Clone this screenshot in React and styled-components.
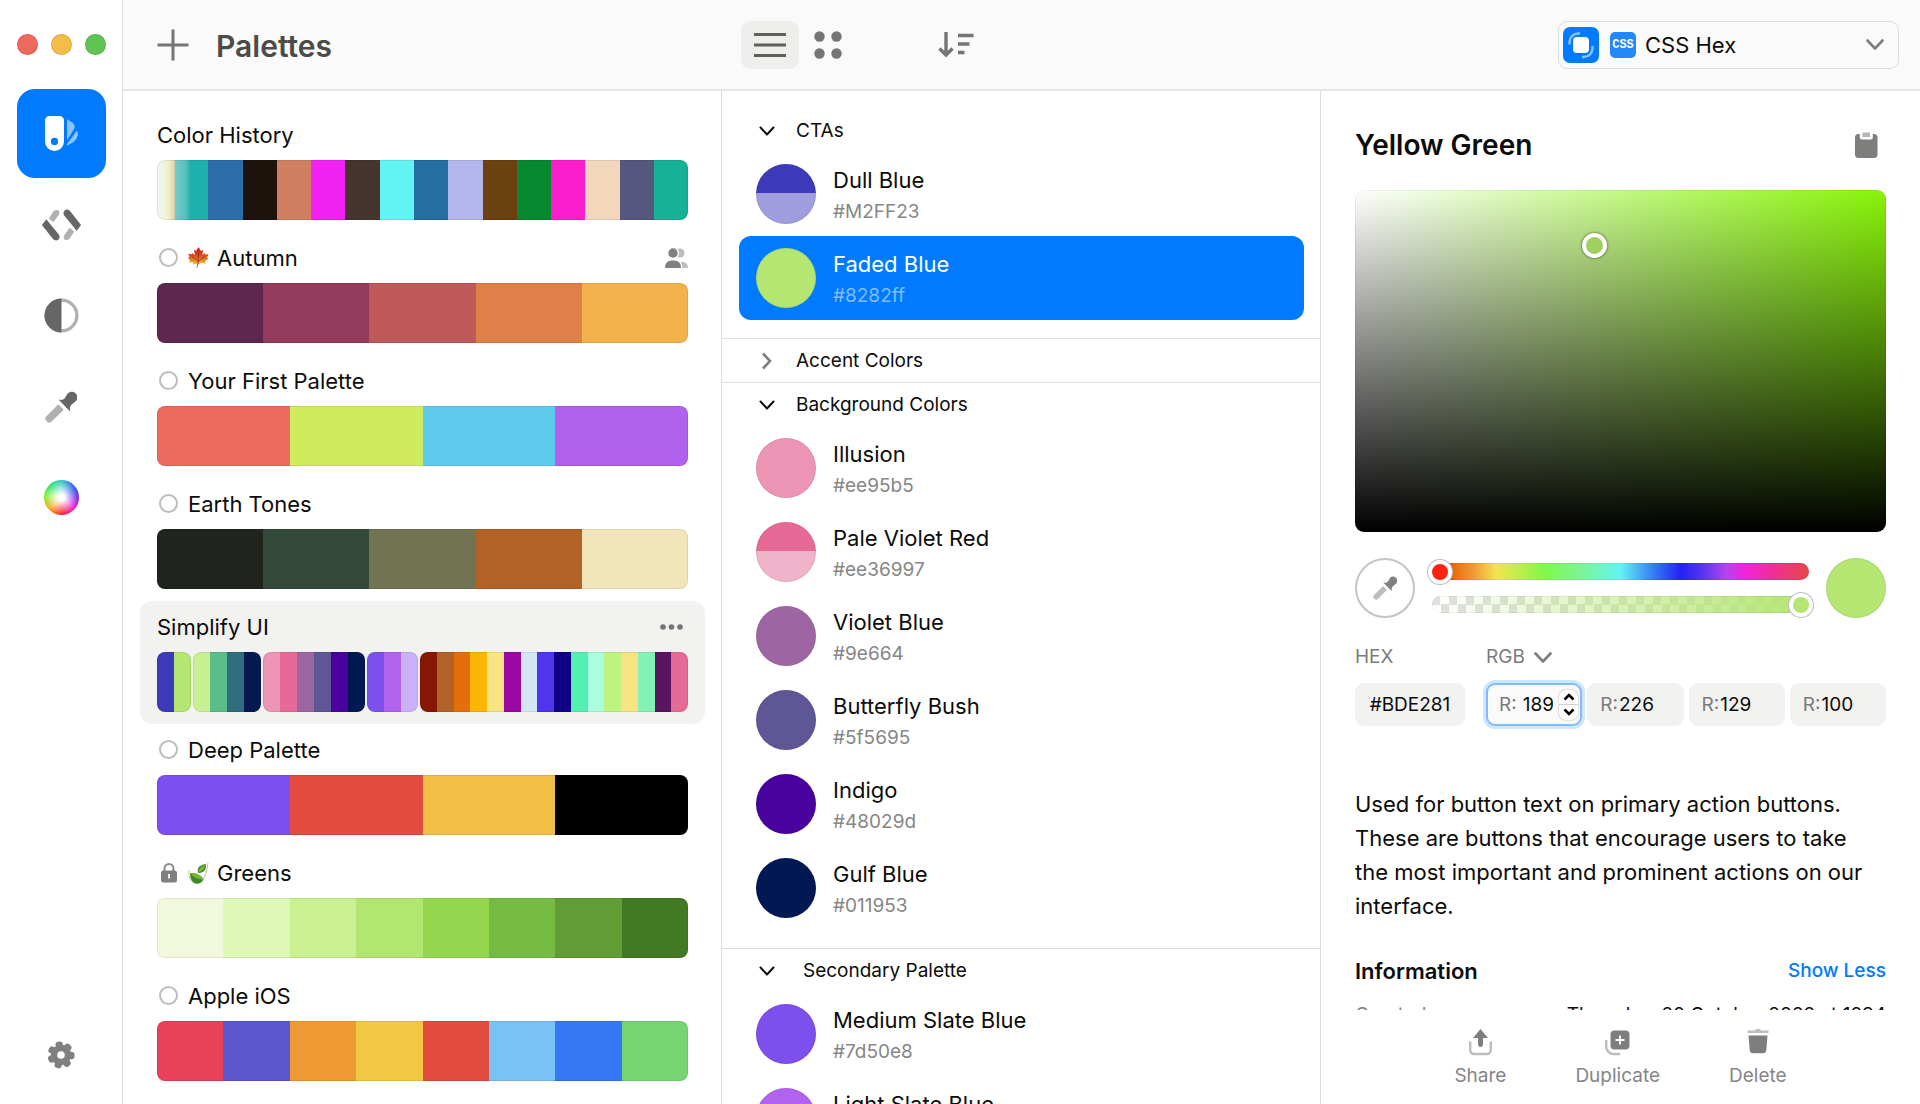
import React from "react";
import styled, { createGlobalStyle, css } from "styled-components";

const Global = createGlobalStyle`
  * { box-sizing: border-box; }
  body { margin: 0; background: #fff; }
  body, button, input, select {
    font-family: Inter, "Liberation Sans", sans-serif;
    color: #0c0c0a;
  }
  button, select, input { border: 0; padding: 0; margin: 0; background: none; }
  h1, h2, h3, p, ul, dl, dd, dt { margin: 0; padding: 0; }
  ul { list-style: none; }
`;

const Window = styled.div`
  display: grid;
  grid-template-columns: 123px minmax(0, 1fr);
  height: 100vh;
  overflow: hidden;
`;

/* ---------- sidebar ---------- */

const Sidebar = styled.nav`
  display: flex;
  flex-direction: column;
  align-items: center;
  border-right: 1px solid #dedee0;
  padding: 34px 0 35px;
`;

const Lights = styled.div`
  display: flex;
  gap: 13px;
  margin-bottom: 34px;
`;

const Light = styled.button`
  width: 21px;
  height: 21px;
  border-radius: 50%;
  background: ${(p) => p.$color};
  box-shadow: inset 0 0 0 1px rgba(0, 0, 0, 0.1);
`;

const Tools = styled.div`
  display: flex;
  flex-direction: column;
  gap: 2px;
  flex: 1;
`;

const Tool = styled.button`
  display: grid;
  place-items: center;
  width: 89px;
  height: 89px;
  border-radius: 18px;
  background: ${(p) => (p.$active ? "#007aff" : "transparent")};
`;

const Wheel = styled.span`
  width: 35px;
  height: 35px;
  border-radius: 50%;
  background: radial-gradient(circle, #fff 12%, rgba(255, 255, 255, 0) 68%),
    conic-gradient(#35c8c8, #2a4bef 60deg, #8a1ff0 95deg, #f018c8 130deg, #f5232b 180deg, #f7a51c 225deg, #8bee2a 275deg, #34e06c 315deg, #35c8c8);
`;

const IconButton = styled.button`
  display: grid;
  place-items: center;
`;

/* ---------- main frame ---------- */

const Main = styled.div`
  display: grid;
  grid-template-rows: 91px minmax(0, 1fr);
  min-width: 0;
  min-height: 0;
`;

const columns = css`
  display: grid;
  grid-template-columns: repeat(3, minmax(0, 1fr));
`;

const Header = styled.header`
  ${columns}
  align-items: center;
  background: #fafafa;
  border-bottom: 2px solid #e6e6e6;
`;

const HeaderPart = styled.div`
  display: flex;
  align-items: center;
  justify-content: ${(p) => (p.$end ? "flex-end" : "flex-start")};
  padding: 0 ${(p) => (p.$end ? 21 : 0)}px 0 ${(p) => p.$left}px;
`;

const PageTitle = styled.h1`
  margin-left: 27px;
  padding-top: 2px;
  font-size: 30px;
  line-height: 34px;
  font-weight: 600;
  color: #4b4b47;
`;

const ViewButton = styled.button`
  display: grid;
  place-items: center;
  width: 58px;
  height: 48px;
  border-radius: 9px;
  background: ${(p) => (p.$active ? "#eeeeec" : "transparent")};
`;

const SortButton = styled(ViewButton)`
  margin-left: 70px;
`;

const FormatBox = styled.label`
  display: flex;
  align-items: center;
  width: 341px;
  height: 48px;
  padding: 0 14px 0 4px;
  border: 1px solid #dcdcdc;
  border-radius: 9px;
`;

const CssBadge = styled.span`
  display: grid;
  place-items: center;
  width: 26px;
  height: 26px;
  margin: 0 9px 0 11px;
  border-radius: 5px;
  background: #2389fb;
  color: #fff;
  font: 700 12px/12px "Liberation Mono", monospace;
`;

const PlainSelect = styled.select`
  appearance: none;
  outline: 0;
  font-size: ${(p) => p.$size}px;
  line-height: 26px;
  color: ${(p) => p.$color};
  ${(p) => p.$grow && "flex: 1;"}
`;

const Body = styled.div`
  ${columns}
  min-height: 0;
`;

const Column = styled.section`
  display: flex;
  flex-direction: column;
  min-width: 0;
  min-height: 0;
  overflow: hidden;
  border-right: ${(p) => (p.$line ? "1px solid #dedede" : "0")};
`;

/* ---------- palettes ---------- */

const PaletteList = styled.ul`
  padding: 18px 16px 0 17px;
`;

const PaletteItem = styled.li`
  flex: none;
  height: 123px;
  padding: 0 17px;
  border-radius: 12px;
  background: ${(p) => (p.$active ? "#f2f2f1" : "transparent")};
`;

const PaletteHead = styled.div`
  display: flex;
  align-items: center;
  gap: 8px;
  height: 51px;
`;

const Mark = styled.span`
  display: grid;
  place-items: center;
  width: 23px;
  height: 22px;
`;

const Tick = styled.input`
  appearance: none;
  width: 19px;
  height: 19px;
  border: 2px solid #bdbdbd;
  border-radius: 50%;
`;

const PaletteName = styled.label`
  flex: 1;
  font-size: 22px;
  line-height: 26px;
`;

const MoreButton = styled(IconButton)`
  margin-right: 2px;
`;

const Groups = styled.div`
  display: flex;
  gap: 2px;
  height: 60px;
`;

const Group = styled.div`
  position: relative;
  display: flex;
  flex: none;
  width: ${(p) => p.$count * 17}px;
  overflow: hidden;
  border-radius: 8px;
  &:last-child {
    flex: 1;
  }
  &::after {
    content: "";
    position: absolute;
    inset: 0;
    border-radius: 8px;
    box-shadow: inset 0 0 0 1px rgba(0, 0, 0, 0.08);
  }
`;

const Chip = styled.span`
  flex: ${(p) => (p.$wide ? 3 : 2)};
  background: ${(p) => p.$fill};
`;

/* ---------- colours ---------- */

const Sections = styled.div`
  padding-top: 18px;
`;

const Section = styled.section`
  padding-bottom: ${(p) => (p.$open ? 18 : 0)}px;
  & + & {
    border-top: 1px solid #dedede;
  }
`;

const SectionHead = styled.button`
  display: flex;
  align-items: center;
  gap: ${(p) => (p.$nested ? 28 : 21)}px;
  width: 100%;
  height: 43px;
  padding-left: 37px;
  font-size: 19px;
  line-height: 22px;
`;

const ColorRow = styled.button`
  display: flex;
  align-items: center;
  gap: 17px;
  width: calc(100% - 33px);
  height: 84px;
  margin-left: 17px;
  padding-left: 17px;
  border-radius: 12px;
  text-align: left;
  background: ${(p) => (p.$active ? "#007aff" : "transparent")};
  color: ${(p) => (p.$active ? "#fff" : "#0c0c0a")};
`;

const Dot = styled.span`
  flex: none;
  width: 60px;
  height: 60px;
  border-radius: 50%;
  background: ${(p) => p.$fill};
  box-shadow: inset 0 0 0 1px rgba(0, 0, 0, 0.06);
`;

const RowText = styled.span`
  display: flex;
  flex-direction: column;
  gap: 6px;
  padding-top: 3px;
`;

const RowName = styled.span`
  font-size: 22px;
  line-height: 26px;
`;

const RowCode = styled.span`
  font-size: 19px;
  line-height: 26px;
  color: ${(p) => (p.$active ? "#80bdff" : "#868686")};
`;

/* ---------- inspector ---------- */

const Inspector = styled.div`
  flex: 1;
  min-height: 0;
  overflow: hidden;
  padding: 29px 34px 0;
`;

const Between = styled.div`
  display: flex;
  align-items: center;
  justify-content: space-between;
`;

const ColorTitle = styled.h2`
  font-size: 28px;
  line-height: 50px;
  font-weight: 600;
`;

const ClipButton = styled(IconButton)`
  margin-right: 8px;
`;

const Field = styled.div`
  position: relative;
  height: 342px;
  margin-top: 20px;
  border-radius: 9px;
  background: linear-gradient(to top, #000, rgba(0, 0, 0, 0)), linear-gradient(to right, #fff, #88f408);
  box-shadow: inset 0 0 0 1px rgba(0, 0, 0, 0.06);
`;

const FieldThumb = styled.span`
  position: absolute;
  left: 45%;
  top: 16%;
  width: 25px;
  height: 25px;
  margin: -12px;
  border: 4px solid #fff;
  border-radius: 50%;
  background: #a0d060;
  box-shadow: 0 0 2px 1px rgba(0, 0, 0, 0.3);
`;

const Mixer = styled.div`
  display: flex;
  align-items: center;
  margin-top: 26px;
`;

const Dropper = styled.button`
  display: grid;
  place-items: center;
  width: 60px;
  height: 60px;
  border: 2px solid #c4c4c4;
  border-radius: 50%;
`;

const Sliders = styled.div`
  display: grid;
  gap: 16px;
  flex: 1;
  padding: 0 17px;
`;

const Track = styled.div`
  display: flex;
  align-items: center;
  height: 17px;
  border-radius: 9px;
  background: ${(p) => p.$fill};
  box-shadow: inset 0 0 0 1px rgba(0, 0, 0, 0.05);
`;

const Range = styled.input`
  appearance: none;
  flex: 1;
  height: 26px;
  margin: 0 -4px;
  outline: 0;
  &::-webkit-slider-thumb {
    appearance: none;
    width: 24px;
    height: 24px;
    border: 4px solid #fff;
    border-radius: 50%;
    background: ${(p) => p.$thumb};
    box-shadow: 0 0 0 1px #bdbdbd;
  }
`;

const Values = styled.div`
  display: grid;
  grid-template-columns: 110px minmax(0, 1fr);
  gap: 14px 21px;
  margin-top: 27px;
`;

const ValueLabel = styled.label`
  font-size: 19px;
  line-height: 24px;
  color: #7b7b7b;
`;

const ModePick = styled.label`
  display: flex;
  align-items: center;
  gap: 9px;
  height: 24px;
`;

const Channels = styled.div`
  display: grid;
  grid-template-columns: repeat(4, minmax(0, 1fr));
  gap: 5px;
`;

const box = css`
  height: 43px;
  border-radius: 9px;
  background: #f2f2f1;
  font-size: 19px;
`;

const HexInput = styled.input`
  ${box}
  width: 100%;
  text-align: center;
`;

const Channel = styled.label`
  ${box}
  display: flex;
  align-items: center;
  gap: ${(p) => (p.$focus ? 6 : 1)}px;
  padding: 0 4px 0 13px;
  color: #7b7b7b;
  ${(p) =>
    p.$focus &&
    css`
      background: #fafafa;
      box-shadow: inset 0 0 0 2px #7fbcff, 0 0 0 3px #cfe6ff;
    `}
`;

const ChannelInput = styled.input`
  flex: 1;
  min-width: 0;
  width: 20px;
  font-size: 19px;
  outline: 0;
`;

const Stepper = styled.span`
  display: flex;
  flex-direction: column;
  flex: none;
  width: 19px;
  height: 30px;
  border-radius: 7px;
  background: #fff;
  box-shadow: 0 0 2px rgba(0, 0, 0, 0.35);
`;

const Step = styled.button`
  display: grid;
  place-items: center;
  flex: 1;
  & + & {
    border-top: 1px solid #d0d0d0;
  }
`;

const Notes = styled.p`
  margin-top: 61px;
  padding-right: 12px;
  font-size: 22px;
  line-height: 34px;
`;

const InfoHead = styled(Between)`
  height: 24px;
  margin-top: 36px;
`;

const InfoTitle = styled.h3`
  font-size: 22px;
  line-height: 24px;
  font-weight: 600;
`;

const InfoLink = styled.a`
  font-size: 19px;
  line-height: 24px;
  font-weight: 500;
  color: #007aff;
  text-decoration: none;
`;

const InfoRow = styled.dl`
  display: flex;
  justify-content: space-between;
  margin-top: 20px;
  font-size: 19px;
  line-height: 24px;
  white-space: nowrap;
  & dt {
    color: #868686;
  }
`;

const Actions = styled.footer`
  display: flex;
  justify-content: center;
  gap: 69px;
  flex: none;
  height: 94px;
  padding-top: 19px;
  background: #fff;
`;

const Action = styled.button`
  display: flex;
  flex-direction: column;
  align-items: center;
  gap: 8px;
  height: 60px;
  font-size: 19px;
  line-height: 24px;
  color: #868686;
`;

/* ---------- icons ---------- */

const SwatchIcon = () => (
  <svg width="33" height="35" viewBox="0 0 33 35">
    <path fill="#fff" fillRule="evenodd" d="M4.500 0h10a4.500 4.500 0 0 1 4.500 4.500v21a9.500 9.500 0 0 1-19 0v-21A4.500 4.500 0 0 1 4.500 0zm5 21.800a3.600 3.600 0 1 0 0 7.200 3.600 3.600 0 0 0 0-7.200z" />
    <path fill="#8cc3ff" d="M22 3.200l5.300 3.300q3 2.300 2.300 5.500L22 24.500z" />
    <path fill="#8cc3ff" d="M31.800 14.800q1.600 1.200 1 4.500-.8 4.200-4.300 6.700L22 29.800v-1.800z" />
  </svg>
);

const CodeHalf = ({ turn }) => (
  <g transform={turn ? "rotate(180 19.5 16)" : undefined}>
    <path fill="#b0b0b0" d="M6.800 9.600L10.800 3.200Q13 0 16 1.300Q18.500 3 16.500 6.200L11.300 13.200z" />
    <path fill="#666" d="M4.300 10.200L16.800 25.400Q18.600 28.500 16.200 30.800Q13.500 32.400 11 30L.3 16.600Q-.1 16 .3 15.400z" />
  </g>
);

const CodeIcon = () => (
  <svg width="39" height="32" viewBox="0 0 39 32">
    <CodeHalf />
    <CodeHalf turn />
  </svg>
);

const ContrastIcon = () => (
  <svg width="35" height="35" viewBox="0 0 36 36">
    <circle cx="18" cy="18" r="15.800" fill="#fff" stroke="#b0b0b0" strokeWidth="3.400" />
    <path fill="#666" d="M18 .5a17.500 17.500 0 0 0 0 35z" />
  </svg>
);

const DropperIcon = ({ size, dark, light }) => (
  <svg width={size} height={size} viewBox="0 0 32 32">
    <path d="M15.500 16.500L4.300 27.700" stroke={light} strokeWidth="7.500" strokeLinecap="round" />
    <path fill="#fff" d="M10 10l12 12 2-6-8-8z" />
    <path fill={dark} d="M13.500 8.500q4 1.200 6-1l3.200-5a5.500 5.500 0 0 1 8.200 7.600l-4.800 3.800q-1.800 2-1 6.500z" />
  </svg>
);

const GearIcon = () => (
  <svg width="28" height="28" viewBox="-14 -14 28 28">
    <g fill="#808080">
      <circle r="10.200" />
      {[0, 1, 2, 3, 4, 5, 6].map((i) => (
        <rect key={i} x="-3.600" y="-13.500" width="7.200" height="7" rx="2.800" transform={`rotate(${i * 51.43 - 10})`} />
      ))}
    </g>
    <circle r="3.800" fill="#fff" />
  </svg>
);

const PlusIcon = () => (
  <svg width="32" height="32" viewBox="0 0 32 32" stroke="#757573" strokeWidth="3">
    <path d="M16 .5v31M.5 16h31" />
  </svg>
);

const ListIcon = () => (
  <svg width="32" height="26" viewBox="0 0 32 26" stroke="#5e5e5a" strokeWidth="3">
    <path d="M0 2.500h32M0 13h32M0 23.500h32" />
  </svg>
);

const GridIcon = () => (
  <svg width="28" height="28" viewBox="0 0 28 28" fill="#757573">
    <circle cx="5.500" cy="5.500" r="5.200" />
    <circle cx="22.500" cy="5.500" r="5.200" />
    <circle cx="5.500" cy="22.500" r="5.200" />
    <circle cx="22.500" cy="22.500" r="5.200" />
  </svg>
);

const SortIcon = () => (
  <svg width="36" height="27" viewBox="0 0 36 27" fill="none" stroke="#757573" strokeWidth="3.400">
    <path d="M8 1v23M1.500 17.500L8 24l6.500-6.500" />
    <path d="M20 4.500h15.500M20 13h11.500M20 21.500h6.500" />
  </svg>
);

const Chevron = ({ w = 14, h = 9, color = "#0c0c0a", stroke = 2 }) => (
  <svg width={w} height={h} viewBox={`0 0 ${w} ${h}`} fill="none" stroke={color} strokeWidth={stroke} strokeLinecap="round" strokeLinejoin="round">
    <path d={`M1.500 1.500L${w / 2} ${h - 1.5}L${w - 1.5} 1.500`} />
  </svg>
);

const ChevronRight = () => (
  <svg width="16" height="18" viewBox="0 0 16 18" fill="none" stroke="#808080" strokeWidth="2.600">
    <path d="M4 1.500L11 9 4 16.500" />
  </svg>
);

const AppIcon = () => (
  <svg width="36" height="36" viewBox="0 0 36 36" fill="none">
    <rect width="36" height="36" rx="7" fill="#007aff" />
    <rect x="10" y="10" width="16" height="16" rx="4" fill="#fff" />
    <path d="M6.500 17.500V15A8.500 8.500 0 0 1 15 6.500h2M29.500 19v2.500a8.500 8.500 0 0 1-8.500 8.500h-2" stroke="#8cc3ff" strokeWidth="2.400" />
  </svg>
);

const PeopleIcon = () => (
  <svg width="23" height="20" viewBox="0 0 23 20">
    <circle cx="15" cy="5" r="4.500" fill="#bdbdbd" />
    <path d="M12 20c0-8 11-8 11 0z" fill="#bdbdbd" />
    <circle cx="8" cy="5" r="6" fill="#fff" />
    <path d="M0 20q0-8.500 8-8.500 9.500 0 9.500 8.500z" fill="#fff" />
    <circle cx="8" cy="5" r="4.700" fill="#808080" />
    <path d="M0 20q0-7.500 7-7.500h2q7 0 7 7.500z" fill="#808080" />
  </svg>
);

const MoreIcon = () => (
  <svg width="26" height="6" viewBox="0 0 26 6" fill="#757575">
    <circle cx="3" cy="3" r="2.800" />
    <circle cx="11.500" cy="3" r="2.800" />
    <circle cx="20" cy="3" r="2.800" />
  </svg>
);

const LockIcon = () => (
  <svg width="16" height="20" viewBox="0 0 16 20">
    <path d="M3.500 9V5.500a4.500 4.500 0 0 1 9 0V9" fill="none" stroke="#8a8a8a" strokeWidth="2" />
    <rect y="7.500" width="16" height="12" rx="2.500" fill="#808080" />
    <path d="M8 11v4.500" stroke="#fff" strokeWidth="1.800" />
  </svg>
);

const MapleIcon = () => (
  <svg width="21" height="21" viewBox="0 0 22 22">
    <defs>
      <linearGradient id="maple" x1="0" y1="0" x2="0" y2="1">
        <stop offset="0.100" stopColor="#c8231c" />
        <stop offset="0.500" stopColor="#d8501c" />
        <stop offset="0.900" stopColor="#f5b030" />
      </linearGradient>
    </defs>
    <path fill="url(#maple)" d="M11 0l2.600 4.200 2.200-1-.8 5.300 2.500-2.200.6 1.700 3.600-.6-1.800 3.500 1.600 1-3.500 3 .6 2.300-5.500-.6-1.900 2-1.900-1.400-3.800 1.300-.2-2.400L1 16.500l1.200-2L0 11.500l1.500-.9L.3 7.200l3.800.5.500-1.500L7.200 8.500 6.300 3l2.300 1z" />
    <path d="M11 5l-.5 12-1.200 4.500M10.700 15L4 10M10.700 15l7-5" fill="none" stroke="#8c2414" strokeWidth="0.800" />
  </svg>
);

const HerbIcon = () => (
  <svg width="21" height="22" viewBox="0 0 21 22">
    <path fill="#3f8a22" d="M2 11c4-.5 11 1 13.500 6.500-2 4-5.500 5-8.500 4C3.500 20 2 16 2 11z" />
    <path fill="#79b63a" d="M2 11c4-.5 10.500 1 13.500 6.500C10.500 17.500 5.500 15.500 2 11z" />
    <path fill="#3f8a22" d="M10 11C8.500 6 12 2.500 18 2c.5 5-2 9.500-8 9z" />
    <path fill="#79b63a" d="M10 11C10.500 7 14 4 18 2 16 6.500 14 9.500 10 11z" />
    <path d="M20 1C19 8 17.500 13 15 17.500" fill="none" stroke="#a8b48a" strokeWidth="0.800" />
    <path d="M.8 8C.5 14 2 19 6 21" fill="none" stroke="#a8c48a" strokeWidth="0.800" />
  </svg>
);

const ClipIcon = () => (
  <svg width="23" height="26" viewBox="0 0 23 26">
    <rect y="2" width="22.500" height="24" rx="3.500" fill="#7e7e7c" />
    <path d="M4.800 0h13v5.500a2 2 0 0 1-2 2h-9a2 2 0 0 1-2-2z" fill="#fff" />
    <rect x="7.500" y="0.500" width="7.500" height="4.500" fill="#b5b5b3" />
  </svg>
);

const ShareIcon = () => (
  <svg width="23" height="27" viewBox="0 0 23 27">
    <path d="M1.200 12.500v8.500a4 4 0 0 0 4 4h12.600a4 4 0 0 0 4-4v-8.500" fill="none" stroke="#bdbdbb" strokeWidth="2.400" />
    <path d="M11.500 0L19 9h-5v6.500a2.500 2.500 0 0 1-5 0V9H4z" fill="#7e7e7c" />
  </svg>
);

const DuplicateIcon = () => (
  <svg width="25" height="27" viewBox="0 0 25 27">
    <path d="M1.200 11v6.500a7.500 7.500 0 0 0 7.500 7.500h6.500" fill="none" stroke="#bdbdbb" strokeWidth="2.400" />
    <rect x="5.500" y="1.500" width="19" height="19" rx="4" fill="#7e7e7c" />
    <path d="M15 6.500v9M10.500 11h9" stroke="#fff" strokeWidth="1.800" />
  </svg>
);

const TrashIcon = () => (
  <svg width="22" height="27" viewBox="0 0 22 27">
    <path d="M.5 1.500h7.500l1-1.500h4l1 1.500h7.500V4H.5z" fill="#bdbdbb" />
    <path d="M1.500 6.500h19L19.300 21a3.500 3.500 0 0 1-3.500 3.200H6.200A3.500 3.500 0 0 1 2.700 21z" fill="#7e7e7c" />
  </svg>
);

/* ---------- data ---------- */

const historyStart = "linear-gradient(to right, #f4f4f2, #f0f5dc 16%, #e8f0c8 24%, #f3d7b0 30%, #efcfa4 34%, #74cccb 35%, #58bfc0 56%, #1eb0aa 66%, #1eb0aa)";

const palettes = [
  {
    id: "history",
    name: "Color History",
    wideFirst: true,
    groups: [[historyStart, "#2b6cab", "#1e120d", "#d08060", "#f222f2", "#46352f", "#62f4f4", "#236fa0", "#b2b6ec", "#6b4110", "#06882f", "#f91dcc", "#f3d7bd", "#56577e", "#17b198"]],
  },
  { id: "autumn", name: "Autumn", mark: "tick", emoji: <MapleIcon />, shared: true, groups: [["#5e274f", "#943a5b", "#c0595a", "#df8048", "#f4b24c"]] },
  { id: "first", name: "Your First Palette", mark: "tick", groups: [["#ec6a5e", "#d0ec5e", "#5ecaec", "#b261ee"]] },
  { id: "earth", name: "Earth Tones", mark: "tick", groups: [["#20241f", "#334a3b", "#717352", "#b26224", "#f2e5b9"]] },
  {
    id: "simplify",
    name: "Simplify UI",
    active: true,
    groups: [
      ["#3c3ab8", "#b4e671"],
      ["#c9f090", "#5bbd8a", "#2e6e7e", "#04194f"],
      ["#ec95b5", "#e66a95", "#9d66a3", "#5f5695", "#48029d", "#011953"],
      ["#7d50ee", "#b163f0", "#cab2fb"],
      ["#851703", "#b26224", "#e66d0b", "#feb604", "#f8e480", "#9b08a3", "#d3e6f8", "#5035ef", "#0f0185", "#54efb2", "#aafee0", "#bff37f", "#f5e480", "#84f2b6", "#591462", "#e66a95"],
    ],
  },
  { id: "deep", name: "Deep Palette", mark: "tick", groups: [["#7c4ff0", "#e44b40", "#f0bf43", "#000000"]] },
  { id: "greens", name: "Greens", mark: "lock", emoji: <HerbIcon />, groups: [["#f2f8dc", "#def8b6", "#c9f091", "#b3e671", "#94d64e", "#74ba43", "#649d35", "#437825"]] },
  { id: "apple", name: "Apple iOS", mark: "tick", groups: [["#e8415a", "#5a56cb", "#f09a36", "#f2c944", "#e44b40", "#79c2f6", "#3478f6", "#74d572"]] },
];

const half = (a, b) => `linear-gradient(${a} 48%, ${b} 48%)`;

const sections = [
  {
    name: "CTAs",
    open: true,
    colors: [
      { name: "Dull Blue", code: "#M2FF23", fill: half("#3c3ab8", "#9f9ddd") },
      { name: "Faded Blue", code: "#8282ff", fill: "#b4e671", active: true },
    ],
  },
  { name: "Accent Colors", colors: [] },
  {
    name: "Background Colors",
    open: true,
    colors: [
      { name: "Illusion", code: "#ee95b5", fill: "#ec95b5" },
      { name: "Pale Violet Red", code: "#ee36997", fill: half("#e66a95", "#efb4c9") },
      { name: "Violet Blue", code: "#9e664", fill: "#9d66a3" },
      { name: "Butterfly Bush", code: "#5f5695", fill: "#5f5695" },
      { name: "Indigo", code: "#48029d", fill: "#48029d" },
      { name: "Gulf Blue", code: "#011953", fill: "#011953" },
    ],
  },
  {
    name: "Secondary Palette",
    open: true,
    nested: true,
    colors: [
      { name: "Medium Slate Blue", code: "#7d50e8", fill: "#7d50ee" },
      { name: "Light Slate Blue", code: "#b163f0", fill: "#b163f0" },
    ],
  },
];

const hueFill =
  "linear-gradient(to right, #f5230f 3%, #e8700c 6%, #f09a36 11%, #f2e54c 17%, #80f84c 30%, #7cf49a 40%, #62f4f4 50%, #3478f6 59%, #2222f4 66%, #5a35ef 72%, #b444ee 78%, #f222dd 83%, #ee3090 91%, #e84848)";
const alphaFill =
  "linear-gradient(to right, rgba(180,230,113,0), #b4e671), repeating-conic-gradient(#fff 0 25%, #e0e0e0 0 50%) 0 0 / 17px 17px";

const Palette = ({ item }) => (
  <PaletteItem $active={item.active}>
    <PaletteHead>
      {item.mark === "tick" && (
        <Mark>
          <Tick type="checkbox" id={item.id} />
        </Mark>
      )}
      {item.mark === "lock" && (
        <Mark>
          <LockIcon />
        </Mark>
      )}
      {item.emoji}
      <PaletteName htmlFor={item.mark === "tick" ? item.id : undefined}>{item.name}</PaletteName>
      {item.shared && <PeopleIcon />}
      {item.active && (
        <MoreButton aria-label="More">
          <MoreIcon />
        </MoreButton>
      )}
    </PaletteHead>
    <Groups>
      {item.groups.map((group, g) => (
        <Group key={g} $count={group.length}>
          {group.map((fill, i) => (
            <Chip key={i} $fill={fill} $wide={item.wideFirst && i === 0} />
          ))}
        </Group>
      ))}
    </Groups>
  </PaletteItem>
);

export default function App() {
  return (
    <Window>
      <Global />
      <Sidebar>
        <Lights>
          <Light $color="#ec6a5e" aria-label="Close" />
          <Light $color="#f4bd4a" aria-label="Minimize" />
          <Light $color="#60c454" aria-label="Zoom" />
        </Lights>
        <Tools>
          <Tool $active aria-label="Palettes"><SwatchIcon /></Tool>
          <Tool aria-label="Code"><CodeIcon /></Tool>
          <Tool aria-label="Contrast"><ContrastIcon /></Tool>
          <Tool aria-label="Picker"><DropperIcon size={32} dark="#666" light="#b0b0b0" /></Tool>
          <Tool aria-label="Wheel"><Wheel /></Tool>
        </Tools>
        <IconButton aria-label="Settings"><GearIcon /></IconButton>
      </Sidebar>
      <Main>
        <Header>
          <HeaderPart $left={34}>
            <IconButton aria-label="Add palette"><PlusIcon /></IconButton>
            <PageTitle>Palettes</PageTitle>
          </HeaderPart>
          <HeaderPart $left={19}>
            <ViewButton $active aria-label="List view"><ListIcon /></ViewButton>
            <ViewButton aria-label="Grid view"><GridIcon /></ViewButton>
            <SortButton aria-label="Sort"><SortIcon /></SortButton>
          </HeaderPart>
          <HeaderPart $left={0} $end>
            <FormatBox>
              <AppIcon />
              <CssBadge>CSS</CssBadge>
              <PlainSelect $size={22} $color="#0c0c0a" $grow aria-label="Format" defaultValue="CSS Hex">
                <option>CSS Hex</option>
              </PlainSelect>
              <Chevron w={18} h={11} color="#7e7e7c" stroke={2.6} />
            </FormatBox>
          </HeaderPart>
        </Header>
        <Body>
          <Column $line>
            <PaletteList>
              {palettes.map((item) => (
                <Palette key={item.id} item={item} />
              ))}
            </PaletteList>
          </Column>
          <Column $line>
            <Sections>
              {sections.map((s) => (
                <Section key={s.name} $open={s.open}>
                  <SectionHead $nested={s.nested}>
                    {s.open ? <Chevron w={16} h={10} /> : <ChevronRight />}
                    {s.name}
                  </SectionHead>
                  {s.colors.map((c) => (
                    <ColorRow key={c.name} $active={c.active}>
                      <Dot $fill={c.fill} />
                      <RowText>
                        <RowName>{c.name}</RowName>
                        <RowCode $active={c.active}>{c.code}</RowCode>
                      </RowText>
                    </ColorRow>
                  ))}
                </Section>
              ))}
            </Sections>
          </Column>
          <Column>
            <Inspector>
              <Between>
                <ColorTitle>Yellow Green</ColorTitle>
                <ClipButton aria-label="Copy"><ClipIcon /></ClipButton>
              </Between>
              <Field>
                <FieldThumb />
              </Field>
              <Mixer>
                <Dropper aria-label="Pick from screen">
                  <DropperIcon size={24} dark="#808080" light="#bdbdbd" />
                </Dropper>
                <Sliders>
                  <Track $fill={hueFill}>
                    <Range type="range" aria-label="Hue" min="0" max="360" defaultValue="0" $thumb="#fb230f" />
                  </Track>
                  <Track $fill={alphaFill}>
                    <Range type="range" aria-label="Alpha" min="0" max="100" defaultValue="100" $thumb="#b4e671" />
                  </Track>
                </Sliders>
                <Dot $fill="#b4e671" />
              </Mixer>
              <Values>
                <ValueLabel htmlFor="hex">HEX</ValueLabel>
                <ModePick>
                  <PlainSelect $size={19} $color="#7b7b7b" aria-label="Color mode" defaultValue="RGB">
                    <option>RGB</option>
                  </PlainSelect>
                  <Chevron w={18} h={11} color="#7e7e7c" stroke={2.6} />
                </ModePick>
                <HexInput id="hex" defaultValue="#BDE281" />
                <Channels>
                  <Channel $focus>
                    R:
                    <ChannelInput defaultValue="189" />
                    <Stepper>
                      <Step aria-label="Increase">
                        <svg width="12" height="8" viewBox="0 0 12 8" fill="none" stroke="#000" strokeWidth="2.600"><path d="M1.500 6.500L6 2l4.500 4.500" /></svg>
                      </Step>
                      <Step aria-label="Decrease">
                        <svg width="12" height="8" viewBox="0 0 12 8" fill="none" stroke="#000" strokeWidth="2.600"><path d="M1.500 1.500L6 6l4.500-4.500" /></svg>
                      </Step>
                    </Stepper>
                  </Channel>
                  {["226", "129", "100"].map((v) => (
                    <Channel key={v}>
                      R:
                      <ChannelInput defaultValue={v} />
                    </Channel>
                  ))}
                </Channels>
              </Values>
              <Notes>
                Used for button text on primary action buttons. These are buttons that encourage users to take the most
                important and prominent actions on our interface.
              </Notes>
              <InfoHead>
                <InfoTitle>Information</InfoTitle>
                <InfoLink href="#less">Show Less</InfoLink>
              </InfoHead>
              <InfoRow>
                <dt>Created</dt>
                <dd>Thursday, 20 October 2022 at 1234</dd>
              </InfoRow>
            </Inspector>
            <Actions>
              <Action><ShareIcon />Share</Action>
              <Action><DuplicateIcon />Duplicate</Action>
              <Action><TrashIcon />Delete</Action>
            </Actions>
          </Column>
        </Body>
      </Main>
    </Window>
  );
}
